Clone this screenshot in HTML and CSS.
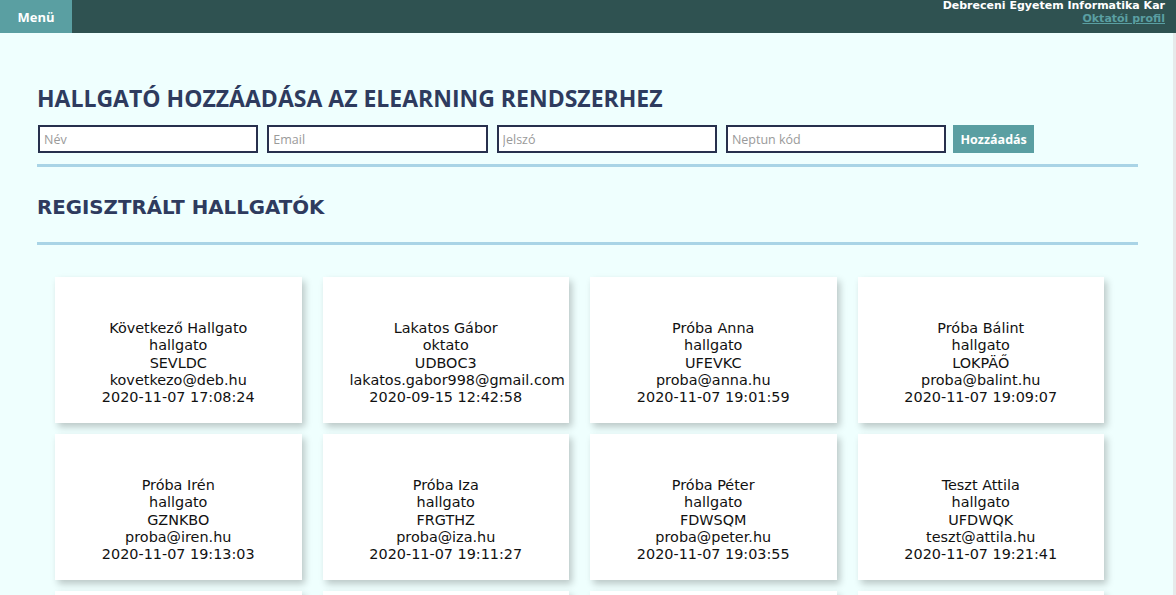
FILE: index.html
```html
<!DOCTYPE html>
<html lang="hu">
<head>
<meta charset="utf-8">
<title>Hallgatók</title>
<link rel="stylesheet" href="styles.css">
</head>
<body>
<header class="topbar">
  <button class="menu-btn">Menü</button>
  <div class="brand">
    <div class="brand-name">Debreceni Egyetem Informatika Kar</div>
    <a class="brand-link" href="#">Oktatói profil</a>
  </div>
</header>
<main class="content">
  <h1 class="title">HALLGATÓ HOZZÁADÁSA AZ ELEARNING RENDSZERHEZ</h1>
  <form class="add-form">
    <input class="field" type="text" placeholder="Név">
    <input class="field" type="text" placeholder="Email">
    <input class="field" type="text" placeholder="Jelszó">
    <input class="field" type="text" placeholder="Neptun kód">
    <button class="add-btn" type="button">Hozzáadás</button>
  </form>
  <hr class="divider">
  <h2 class="subtitle">REGISZTRÁLT HALLGATÓK</h2>
  <hr class="divider divider-low">
  <section class="cards">
    <div class="card"><div>Következő Hallgato</div><div>hallgato</div><div>SEVLDC</div><div>kovetkezo@deb.hu</div><div>2020-11-07 17:08:24</div></div>
    <div class="card"><div>Lakatos Gábor</div><div>oktato</div><div>UDBOC3</div><div>lakatos.gabor998@gmail.com</div><div>2020-09-15 12:42:58</div></div>
    <div class="card"><div>Próba Anna</div><div>hallgato</div><div>UFEVKC</div><div>proba@anna.hu</div><div>2020-11-07 19:01:59</div></div>
    <div class="card"><div>Próba Bálint</div><div>hallgato</div><div>LOKPÄŐ</div><div>proba@balint.hu</div><div>2020-11-07 19:09:07</div></div>
    <div class="card"><div>Próba Irén</div><div>hallgato</div><div>GZNKBO</div><div>proba@iren.hu</div><div>2020-11-07 19:13:03</div></div>
    <div class="card"><div>Próba Iza</div><div>hallgato</div><div>FRGTHZ</div><div>proba@iza.hu</div><div>2020-11-07 19:11:27</div></div>
    <div class="card"><div>Próba Péter</div><div>hallgato</div><div>FDWSQM</div><div>proba@peter.hu</div><div>2020-11-07 19:03:55</div></div>
    <div class="card"><div>Teszt Attila</div><div>hallgato</div><div>UFDWQK</div><div>teszt@attila.hu</div><div>2020-11-07 19:21:41</div></div>
    <div class="card"></div>
    <div class="card"></div>
    <div class="card"></div>
    <div class="card"></div>
  </section>
</main>
<div class="scroll-edge"></div>
</body>
</html>
```

FILE: styles.css
```css
* { box-sizing: border-box; }
html, body { margin: 0; padding: 0; }
body {
  background: #effffe;
  font-family: "DejaVu Sans", sans-serif;
  color: #111;
  overflow: hidden;
}
.topbar {
  display: flex;
  align-items: stretch;
  height: 33px;
  background: #2f5251;
}
.menu-btn {
  width: 72px;
  border: none;
  margin: 0;
  background: #5a9fa2;
  color: #fff;
  font-family: "Open Sans", sans-serif;
  font-weight: 700;
  font-size: 13px;
  padding: 0;
}
.brand {
  margin-left: auto;
  padding-right: 11px;
  text-align: right;
  font-size: 11px;
  font-weight: 700;
  line-height: 12.5px;
  padding-top: 0;
}
.brand-name { color: #fff; }
.brand-link { color: #5a9fa2; text-decoration: underline; }
.content {
  margin: 0 38px 0 37px;
  padding-top: 49px;
}
.title {
  margin: 0;
  font-family: "Open Sans", sans-serif;
  font-weight: 700;
  font-size: 23px;
  line-height: 32px;
  color: #2e3b5e;
}
.add-form {
  display: flex;
  gap: 9px;
  margin-top: 11px;
  padding-left: 1px;
}
.field {
  width: 220.3px;
  height: 28px;
  border: 2px solid #27304d;
  background: #fff;
  padding: 0 4px;
  font-family: "Open Sans", sans-serif;
  font-size: 12.5px;
  color: #333;
  outline: none;
}
.field::placeholder { color: #9a9a9a; }
.add-btn {
  width: 81px;
  height: 28px;
  border: none;
  background: #5a9fa2;
  color: #fff;
  font-family: "Open Sans", sans-serif;
  font-weight: 700;
  font-size: 12.5px;
  padding: 0;
  margin-left: -2px;
}
.divider {
  margin: 11px 0 0;
  height: 3px;
  border: none;
  background: #a9d4e6;
}
.subtitle {
  margin: 29px 0 0;
  font-size: 19.8px;
  line-height: 24px;
  font-weight: 700;
  color: #2e3b5e;
}
.divider-low { margin-top: 22px; }
.cards {
  display: grid;
  grid-template-columns: repeat(4, 246.5px);
  column-gap: 21px;
  row-gap: 11px;
  margin-top: 32px;
  padding-left: 18px;
}
.card {
  height: 146px;
  background: #fff;
  box-shadow: 3px 4px 7px rgba(0, 0, 0, 0.22);
  padding: 43px 27px 0;
  text-align: center;
  font-size: 14.4px;
  line-height: 17.25px;
  white-space: nowrap;
}
.scroll-edge {
  position: fixed;
  top: 33px;
  right: 0;
  width: 3px;
  bottom: 0;
  background: #e6eaea;
}
```
